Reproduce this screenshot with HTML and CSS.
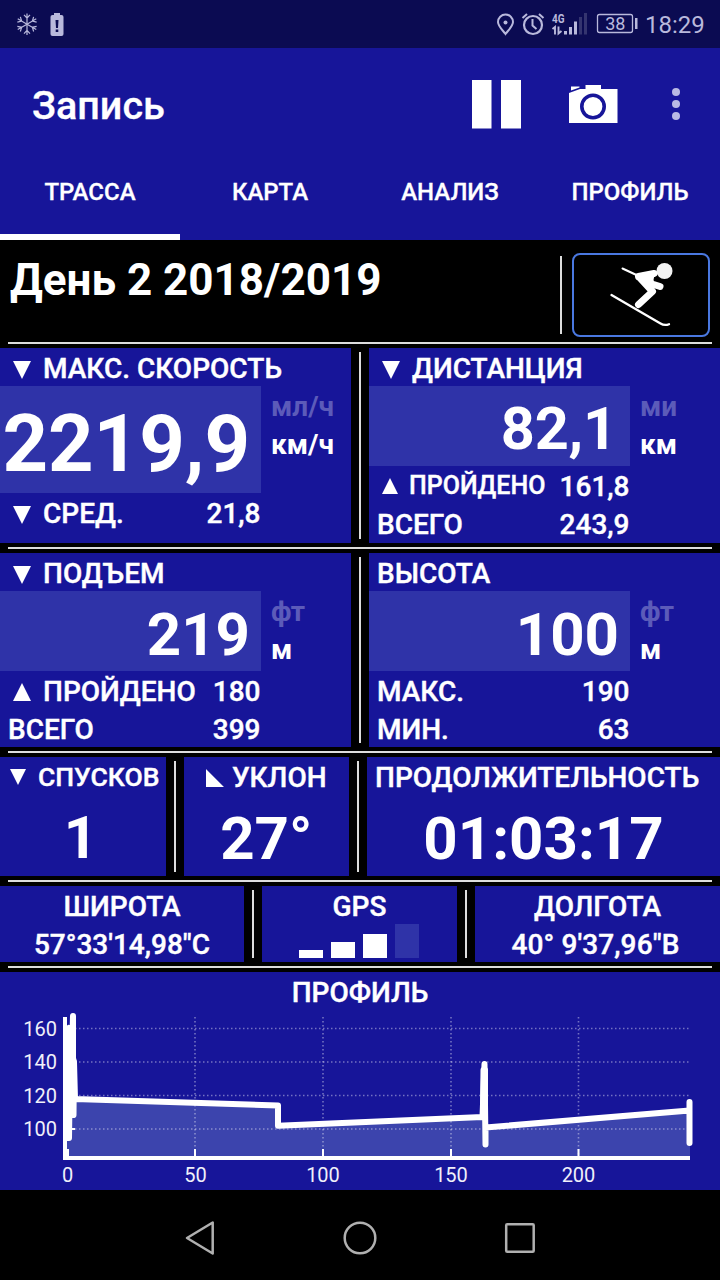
FILE: index.html
```html
<!DOCTYPE html>
<html lang="ru">
<head>
    <meta charset="UTF-8">
    <title>Запись</title>
    <link rel="stylesheet" href="styles.css">
</head>
<body>
<div id="app">
    <div class="status">
        <svg class="status-left" width="50" height="48" viewBox="16 0 50 48">
            <g stroke="#b9b9dc" stroke-width="1.200" fill="none">
                <path id="ray" d="M27 24.200V13.500M24 14.800l3 3.200 3-3.200"/>
                <use href="#ray" transform="rotate(60 27 24.200)"/>
                <use href="#ray" transform="rotate(120 27 24.200)"/>
                <use href="#ray" transform="rotate(180 27 24.200)"/>
                <use href="#ray" transform="rotate(240 27 24.200)"/>
                <use href="#ray" transform="rotate(300 27 24.200)"/>
            </g>
            <path d="M54 13h6v2h-6z" fill="#b9b9dc"/>
            <rect x="50.500" y="15" width="13" height="21" rx="2" fill="#b9b9dc"/>
            <path d="M55.500 20h3l-.5 8h-2zM55.700 29.500h2.600v2.500h-2.600z" fill="#0b0b52"/>
        </svg>
        <div class="status-right">
            <svg width="142" height="48" viewBox="496 0 142 48">
                <g fill="none" stroke="#b9b9dc">
                    <path d="M505.500 34c-3-4-7.500-8-7.500-12a7.500 7.500 0 0 1 15 0c0 4-4.500 8-7.500 12z" stroke-width="2"/>
                    <circle cx="533" cy="25" r="9" stroke-width="2.200"/>
                    <path d="M522.500 18l4.500-4M543.500 18l-4.500-4" stroke-width="2"/>
                    <path d="M532.500 19v6.500l4 3.500" stroke-width="2"/>
                    <rect x="597.500" y="14.500" width="35" height="18" rx="2" stroke-width="1.300"/>
                    <path d="M552.500 29l2.500-2v7.500M558.500 26.500v7l3-2.500" stroke-width="1.900"/>
                </g>
                <circle cx="505.500" cy="22.500" r="2" fill="#b9b9dc"/>
                <path d="M564 31h3v3.500h-3zM569 27h3v7.500h-3zM574 21.500h3v13h-3zM635 18h2.500v11h-2.500z" fill="#b9b9dc"/>
                <path d="M579 17h3v17.500h-3zM584 13h3v21.500h-3z" fill="#34346f"/>
                <text x="552" y="23" class="net" textLength="12.500" lengthAdjust="spacingAndGlyphs">4G</text>
                <text x="615.300" y="30.300" class="charge">38</text>
            </svg>
            <span class="clock">18:29</span>
        </div>
    </div>

    <div class="bar">
        <h1>Запись</h1>
        <svg width="230" height="60" viewBox="460 74 230 60">
            <path d="M472 80h19.500v48.500H472zM501 80h20v48.500h-20z" fill="#fff"/>
            <path d="M569 93l11-4h5.500v-4h15.500v4h16.500v34H569z" fill="#fff"/>
            <path d="M571 86.500h8.500v1l-8.500 3z" fill="#fff"/>
            <circle cx="593" cy="106.500" r="11.200" fill="none" stroke="#171599" stroke-width="3.600"/>
            <g fill="#b9b9e4">
                <circle cx="676" cy="92" r="4"/>
                <circle cx="676" cy="104" r="4"/>
                <circle cx="676" cy="116" r="4"/>
            </g>
        </svg>
    </div>

    <ul class="tabs">
        <li class="select">ТРАССА</li>
        <li>КАРТА</li>
        <li>АНАЛИЗ</li>
        <li>ПРОФИЛЬ</li>
    </ul>

    <div class="day">
        <h2>День 2 2018/2019</h2>
        <div class="sport">
            <svg width="134" height="80" viewBox="574 255 134 80">
                <circle cx="664.500" cy="271" r="8" fill="#f2f2f2"/>
                <g fill="none" stroke="#fff" stroke-linecap="round" stroke-linejoin="round">
                    <path d="M622.500 268.500l14 6.500" stroke-width="2"/>
                    <path d="M638.500 276.500l15.500-3M639 277l12 13M645 276l7 8 8 2.500M652.500 291.500l-14 13" stroke-width="7"/>
                    <path d="M641 276.500l10 9 2-11" stroke-width="3"/>
                    <path d="M611.500 295l49 28.500q4 2.500 8.500.7" stroke-width="2.300"/>
                </g>
            </svg>
        </div>
    </div>
    <div class="rule"></div>

    <div class="row speed-row">
        <div class="panel">
            <div class="label"><i class="down"></i><span>МАКС. СКОРОСТЬ</span></div>
            <div class="reading tall">
                <div class="value">2219,9</div>
                <div class="units"><span class="off">мл/ч</span><span>км/ч</span></div>
            </div>
            <div class="label sub"><i class="down"></i><span>СРЕД.</span><b>21,8</b></div>
        </div>
        <div class="split"></div>
        <div class="panel">
            <div class="label"><i class="down"></i><span>ДИСТАНЦИЯ</span></div>
            <div class="reading">
                <div class="value decimal">82,1</div>
                <div class="units"><span class="off">ми</span><span>км</span></div>
            </div>
            <div class="label sub"><i class="up small"></i><span class="small">ПРОЙДЕНО</span><b>161,8</b></div>
            <div class="label sub"><span>ВСЕГО</span><b>243,9</b></div>
        </div>
    </div>
    <div class="rule"></div>

    <div class="row climb-row">
        <div class="panel">
            <div class="label"><i class="down"></i><span>ПОДЪЕМ</span></div>
            <div class="reading">
                <div class="value">219</div>
                <div class="units"><span class="off">фт</span><span>м</span></div>
            </div>
            <div class="label sub"><i class="up"></i><span>ПРОЙДЕНО</span><b>180</b></div>
            <div class="label sub"><span>ВСЕГО</span><b>399</b></div>
        </div>
        <div class="split"></div>
        <div class="panel">
            <div class="label"><span>ВЫСОТА</span></div>
            <div class="reading">
                <div class="value">100</div>
                <div class="units"><span class="off">фт</span><span>м</span></div>
            </div>
            <div class="label sub"><span>МАКС.</span><b>190</b></div>
            <div class="label sub"><span>МИН.</span><b>63</b></div>
        </div>
    </div>
    <div class="rule"></div>

    <div class="row run-row">
        <div class="panel runs">
            <div class="label"><i class="down small"></i><span class="small">СПУСКОВ</span></div>
            <div class="number">1</div>
        </div>
        <div class="split"></div>
        <div class="panel slope">
            <div class="label"><i class="corner"></i><span>УКЛОН</span></div>
            <div class="number">27°</div>
        </div>
        <div class="split"></div>
        <div class="panel time">
            <div class="label"><span>ПРОДОЛЖИТЕЛЬНОСТЬ</span></div>
            <div class="number">01:03:17</div>
        </div>
    </div>
    <div class="rule"></div>

    <div class="row gps-row">
        <div class="panel lat">
            <div class="label"><span>ШИРОТА</span></div>
            <div class="label coord"><span>57°33'14,98"С</span></div>
        </div>
        <div class="split"></div>
        <div class="panel gps">
            <div class="label"><span>GPS</span></div>
            <div class="signal">
                <i style="height:8px"></i>
                <i style="height:16px"></i>
                <i style="height:24px"></i>
                <i class="off" style="height:34px"></i>
            </div>
        </div>
        <div class="split"></div>
        <div class="panel lon">
            <div class="label"><span>ДОЛГОТА</span></div>
            <div class="label coord"><span>40° 9'37,96"В</span></div>
        </div>
    </div>
    <div class="rule"></div>

    <div class="profile">
        <div class="label"><span>ПРОФИЛЬ</span></div>
        <svg width="720" height="180" viewBox="0 1010 720 180">
            <path class="area" d="M67 1158V1099L278 1105.500V1126.500L484 1117V1128L690 1111V1158z"/>
            <g class="grid">
                <path d="M67 1028.500H690M67 1062H690M67 1095.500H690M67 1129H690"/>
                <path d="M195 1017V1156M323 1017V1156M451 1017V1156M578.500 1017V1156"/>
            </g>
            <path class="tick" d="M195 1149v8M323 1149v8M451 1149v8M578.500 1149v8M68 1149v8M68 1129h7"/>
            <path class="axis" d="M65 1017V1158H690"/>
            <path class="line" d="M67.500 1138V1030L69 1028V1138L70.500 1030V1115L73 1016V1115L74 1062L75 1099L278 1105.500V1125.800L482.500 1117L484.500 1064L485.500 1144.500V1127.500L689.500 1110.500V1102V1143"/>
            <path class="line" d="M70 1115V1030M72 1115V1040M73.500 1060V1115M483 1113L483.500 1070L485 1070V1110"/>
            <g class="ylabels">
                <text x="57" y="1035.500">160</text>
                <text x="57" y="1069">140</text>
                <text x="57" y="1102.700">120</text>
                <text x="57" y="1136.200">100</text>
            </g>
            <g class="xlabels">
                <text x="67.500" y="1181.700">0</text>
                <text x="195.500" y="1181.700">50</text>
                <text x="323" y="1181.700">100</text>
                <text x="451" y="1181.700">150</text>
                <text x="578.500" y="1181.700">200</text>
            </g>
        </svg>
    </div>

    <div class="nav">
        <svg width="720" height="90" viewBox="0 1190 720 90" fill="none" stroke="#b0b0b0" stroke-width="2.500" stroke-linejoin="round">
            <path d="M212.700 1222.500v31L187 1238z"/>
            <circle cx="360" cy="1238" r="15.300"/>
            <rect x="506.200" y="1224.200" width="27.500" height="27.500" rx="1"/>
        </svg>
    </div>
</div>
</body>
</html>
```

FILE: styles.css
```css
*{
    padding: 0;
    margin: 0;
    box-sizing: border-box;
}
body{
    background: #000;
    color: #fff;
    font-family: Roboto, "Noto Sans", sans-serif;
}
li{
    list-style: none;
}
svg{
    display: block;
}
#app{
    width: 720px;
    height: 1280px;
    overflow: hidden;
}

/* status bar */
.status{
    height: 48px;
    background: #0b0b52;
    color: #b9b9dc;
    display: flex;
    justify-content: space-between;
    padding: 0 0 0 16px;
}
.status-right{
    display: flex;
    width: 224px;
}
.clock{
    font-size: 24px;
    line-height: 50px;
    margin-left: 7px;
}
.net{
    font-size: 13px;
    font-weight: 700;
    fill: #b9b9dc;
}
.charge{
    font-size: 18px;
    text-anchor: middle;
    fill: #b9b9dc;
}

/* title and tabs */
.bar{
    height: 112px;
    background: #171599;
    display: flex;
    justify-content: space-between;
    padding: 26px 30px 0 32px;
}
.bar h1{
    font-size: 39.5px;
    font-weight: 500;
    line-height: 64px;
    -webkit-text-stroke: .3px #fff;
}
.tabs{
    height: 80px;
    background: #171599;
    display: flex;
}
.tabs li{
    width: 180px;
    text-align: center;
    font-size: 24px;
    font-weight: 500;
    line-height: 64px;
    -webkit-text-stroke: .3px #fff;
}
.tabs .select{
    border-bottom: 6px solid #fff;
}

/* name of the day */
.day{
    height: 98px;
    display: flex;
    justify-content: space-between;
    padding: 13px 10px 0 10px;
}
.day h2{
    font-size: 44px;
    font-weight: 700;
    line-height: 55px;
}
.sport{
    height: 84px;
    width: 138px;
    border: 2px solid #4a78e0;
    border-radius: 8px;
    position: relative;
}
.sport::before{
    content: "";
    position: absolute;
    left: -14px;
    top: 1px;
    width: 2px;
    height: 78px;
    background: #ddd;
}

/* dashboard */
.rule{
    height: 2px;
    margin: 4px 8px;
    background: #ddd;
}
.split{
    width: 2px;
    margin: 4px 8px;
    background: #ddd;
}
.row{
    display: flex;
}
.panel{
    flex: 1;
    background: #171599;
}
.speed-row{
    height: 195px;
}
.climb-row{
    height: 194px;
}
.run-row{
    height: 119px;
}
.gps-row{
    height: 76px;
}
.label{
    height: 38px;
    line-height: 42px;
    padding-left: 8px;
    font-size: 28px;
    font-weight: 500;
    white-space: nowrap;
    display: flex;
    -webkit-text-stroke: .4px #fff;
}
.label.sub{
    width: 260.5px;
}
.label b{
    font-weight: 500;
    margin-left: auto;
}
.label .small{
    font-size: 25px;
    line-height: 39px;
}
.label i{
    width: 18px;
    height: 18px;
    margin: 13px 12px 0 5px;
    background: #fff;
}
.label .down{
    clip-path: polygon(0 0, 100% 0, 50% 100%);
}
.label .up{
    margin-top: 12px;
    clip-path: polygon(50% 0, 100% 100%, 0 100%);
}
.label .corner{
    margin: 12px 8px 0 0;
    clip-path: polygon(0 0, 100% 100%, 0 100%);
}
.label i.small{
    width: 16px;
    height: 16px;
    margin: 12px 11px 0 5px;
}
.reading{
    display: flex;
    height: 80px;
}
.value{
    width: 261px;
    padding-right: 11px;
    background: #2f33a8;
    text-align: right;
    font-size: 60px;
    font-weight: 700;
    line-height: 87px;
}
.decimal{
    padding-right: 13px;
    font-size: 59.5px;
    letter-spacing: -.2px;
}
.tall{
    height: 107px;
}
.tall .value{
    padding-right: 11px;
    font-size: 79.5px;
    line-height: 115px;
}
.units{
    padding-left: 10px;
    font-size: 28px;
    font-weight: 700;
}
.units span{
    display: block;
    height: 38px;
    line-height: 42px;
}
.units .off{
    color: #5c5bb9;
}
.number{
    text-align: center;
    font-size: 60px;
    font-weight: 700;
    line-height: 87px;
}
.runs,.slope{
    flex: 0 0 165.5px;
}
.runs .label{
    padding-left: 5px;
}
.runs span.small{
    font-size: 26.5px;
    margin-left: 1px;
}
.runs .number{
    font-size: 59px;
    line-height: 85px;
    padding-right: 4px;
}
.slope .label,.gps-row .label,.profile .label{
    justify-content: center;
    padding-left: 0;
}
.lat{
    flex: 0 0 244px;
}
.gps{
    flex: 0 0 195px;
}
.lon .coord{
    padding-right: 4px;
    letter-spacing: .1px;
}
.signal{
    display: flex;
    height: 34px;
    align-items: flex-end;
    justify-content: center;
    gap: 8px;
    padding-right: 1px;
}
.signal i{
    width: 24px;
    background: #fff;
}
.signal .off{
    background: #2f33a8;
}

/* altitude chart */
.profile{
    height: 218px;
    background: #171599;
}
.area{
    fill: #3c44ad;
}
.grid{
    stroke: #fff;
    stroke-opacity: .4;
    stroke-width: 1.600;
    stroke-dasharray: 1.5 2.5;
}
.tick{
    stroke: #fff;
    stroke-width: 2;
}
.axis{
    fill: none;
    stroke: #fff;
    stroke-width: 4;
}
.line{
    fill: none;
    stroke: #fff;
    stroke-width: 6;
    stroke-linecap: round;
    stroke-linejoin: round;
}
.ylabels,.xlabels{
    font-size: 20px;
    fill: #f0f0fa;
}
.ylabels{
    text-anchor: end;
}
.xlabels{
    text-anchor: middle;
}
.nav{
    height: 90px;
    background: #000;
}
```
